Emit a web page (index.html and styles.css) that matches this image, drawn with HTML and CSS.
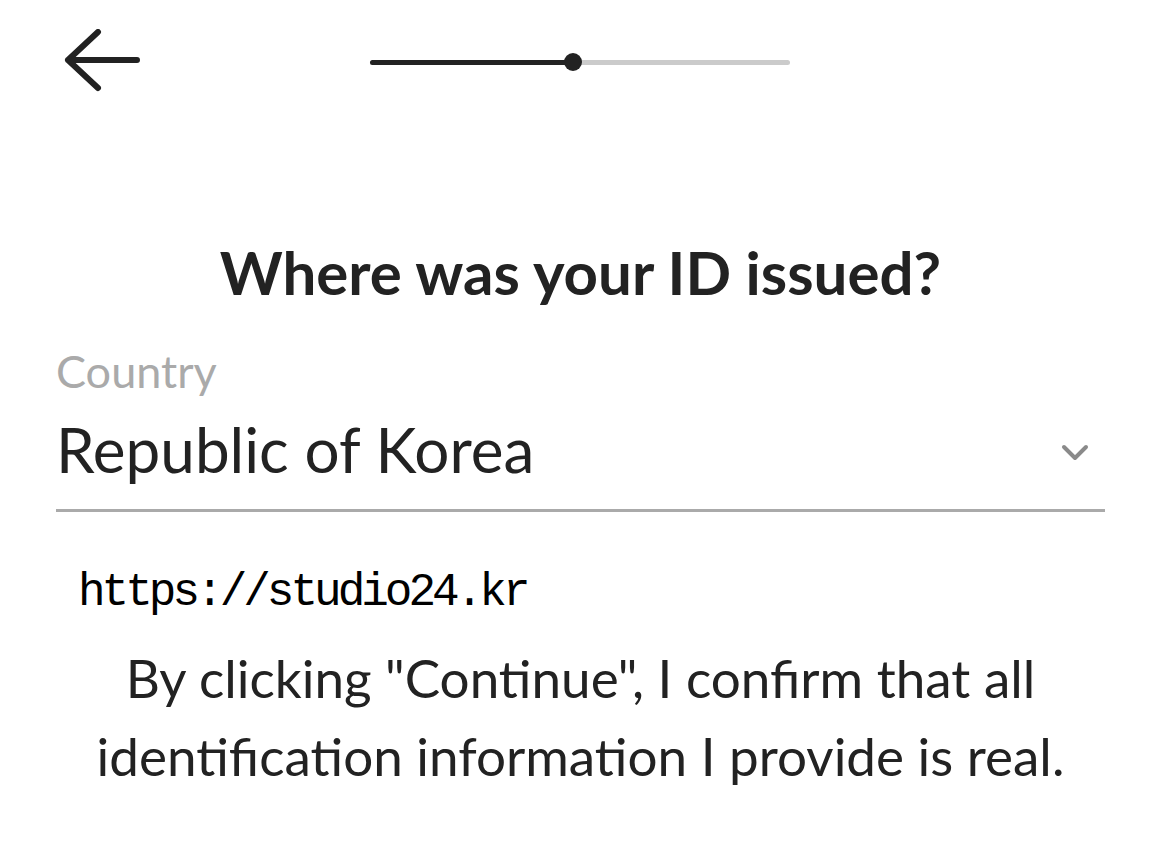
FILE: index.html
```html
<!DOCTYPE html>
<html lang="en">
<head>
  <meta charset="UTF-8" />
  <meta name="viewport" content="width=device-width, initial-scale=1.0" />
  <title>ID Country</title>
  <link rel="stylesheet" href="styles.css">
</head>
<body>
  <div class="topbar">
    <button class="back" aria-label="Back">
      <svg width="80" height="66" viewBox="0 0 80 66">
        <path d="M35 3 L5 31 L35 59 M5 31 L74 31" fill="none" stroke="#222" stroke-width="6" stroke-linecap="round" stroke-linejoin="round"/>
      </svg>
    </button>
    <div class="progress">
      <div class="progress-fill"><span class="dot"></span></div>
    </div>
  </div>

  <h2 class="title">Where was your ID issued?</h2>

  <div class="field">
    <div class="label">Country</div>
    <div class="select">
      <span class="value">Republic of Korea</span>
      <svg class="chevron" width="30" height="20" viewBox="0 0 30 20">
        <path d="M4 4 L15 15 L26 4" fill="none" stroke="#8a8a8a" stroke-width="4" stroke-linecap="round" stroke-linejoin="round"/>
      </svg>
    </div>
  </div>

  <div class="url">https://studio24.kr</div>

  <p class="notice">By clicking "Continue", I confirm that all<br>identification information I provide is real.</p>
</body>
</html>
```

FILE: styles.css
```css
body {
  margin: 0;
  padding: 0 60px 0 56px;
  font-family: 'Lato', 'Noto Sans', sans-serif;
  background: #fff;
  color: #222;
}

.topbar {
  display: flex;
  align-items: center;
  height: 124px;
}

.back {
  background: none;
  border: none;
  padding: 0;
  margin-left: 7px;
  width: 80px;
  height: 66px;
  cursor: pointer;
}

.progress {
  margin-left: 227px;
  width: 420px;
  height: 5px;
  background: #cbcbcb;
  border-radius: 3px;
}

.progress-fill {
  position: relative;
  width: 203px;
  height: 100%;
  background: #222;
  border-radius: 3px 0 0 3px;
}

.dot {
  position: absolute;
  right: -9px;
  top: -7px;
  width: 18px;
  height: 18px;
  border-radius: 50%;
  background: #222;
}

.title {
  margin: 113px 0 0;
  text-align: center;
  font-size: 60px;
  font-weight: 700;
  line-height: 70px;
  color: #222;
}

.field {
  margin-top: 37px;
  border-bottom: 3px solid #aaa;
}

.label {
  font-size: 45px;
  color: #aaa;
  line-height: 54px;
}

.select {
  display: flex;
  align-items: center;
  justify-content: space-between;
  padding: 14px 0 23px;
}

.value {
  font-size: 62px;
  color: #222;
}

.chevron {
  margin: 8px 15px 0 0;
}

.url {
  margin: 54px 0 0 22px;
  font-family: 'Liberation Mono', 'DejaVu Sans Mono', monospace;
  font-size: 46px;
  letter-spacing: -4px;
  line-height: 54px;
  color: #000;
}

.notice {
  margin: 19px 0 0;
  text-align: center;
  font-size: 53px;
  line-height: 78px;
  color: #222;
}
```
